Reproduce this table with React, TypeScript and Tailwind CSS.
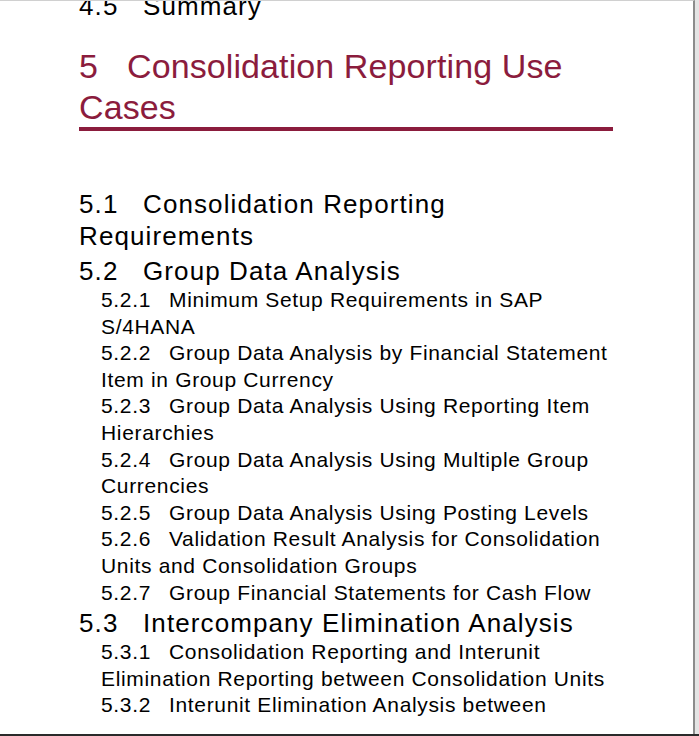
import React from "react";

type Sub = { num: string; title: string };

const SUBS_52: Sub[] = [
  { num: "5.2.1", title: "Minimum Setup Requirements in SAP S/4HANA" },
  { num: "5.2.2", title: "Group Data Analysis by Financial Statement Item in Group Currency" },
  { num: "5.2.3", title: "Group Data Analysis Using Reporting Item Hierarchies" },
  { num: "5.2.4", title: "Group Data Analysis Using Multiple Group Currencies" },
  { num: "5.2.5", title: "Group Data Analysis Using Posting Levels" },
  { num: "5.2.6", title: "Validation Result Analysis for Consolidation Units and Consolidation Groups" },
  { num: "5.2.7", title: "Group Financial Statements for Cash Flow" },
];

// page ends here in the viewport, the rest of 5.3.2 is on the next screen
const SUBS_53: Sub[] = [
  { num: "5.3.1", title: "Consolidation Reporting and Interunit Elimination Reporting between Consolidation Units" },
  { num: "5.3.2", title: "Interunit Elimination Analysis between" },
];

function Section({ num, title, className = "" }: { num: string; title: string; className?: string }) {
  return (
    <div className={`text-[26px] leading-[32px] tracking-[1.1px] text-black ${className}`}>
      <span className="inline-block w-[64px]">{num}</span>
      {title}
    </div>
  );
}

function SubList({ items, className = "" }: { items: Sub[]; className?: string }) {
  return (
    <div className={`pl-[22px] text-[21px] leading-[26.6px] tracking-[0.66px] text-black ${className}`}>
      {items.map((s) => (
        <div key={s.num}>
          <span className="inline-block w-[68px]">{s.num}</span>
          {s.title}
        </div>
      ))}
    </div>
  );
}

export default function App() {
  return (
    <div className="w-[699px] h-[736px] bg-[#e4e4e4] flex flex-col overflow-hidden font-['Liberation_Sans',Arial,sans-serif]">
      <div className="w-[695px] h-[734px] bg-white border-t border-[#d0d0d0] border-r-2 border-r-[#8c8c8c] overflow-hidden">
        <div className="pl-[79px] pr-[80px]">
          <Section num="4.5" title="Summary" className="mt-[-11px]" />

          <h1 className="mt-[24px] text-[34px] leading-[41px] tracking-[0.1px] text-[#8b1c3d] font-normal">
            <span className="inline-block w-[48px]">5</span>
            Consolidation Reporting Use Cases
          </h1>
          <div className="mt-[-1px] h-[4px] bg-[#8b1c3d]" />

          <Section num="5.1" title="Consolidation Reporting Requirements" className="mt-[57px]" />
          <Section num="5.2" title="Group Data Analysis" className="mt-[3px]" />
          <SubList items={SUBS_52} />
          <Section num="5.3" title="Intercompany Elimination Analysis" className="mt-[1px]" />
          <SubList items={SUBS_53} />
        </div>
      </div>
      <div className="h-[2px] bg-[#2a2a2a]" />
    </div>
  );
}
